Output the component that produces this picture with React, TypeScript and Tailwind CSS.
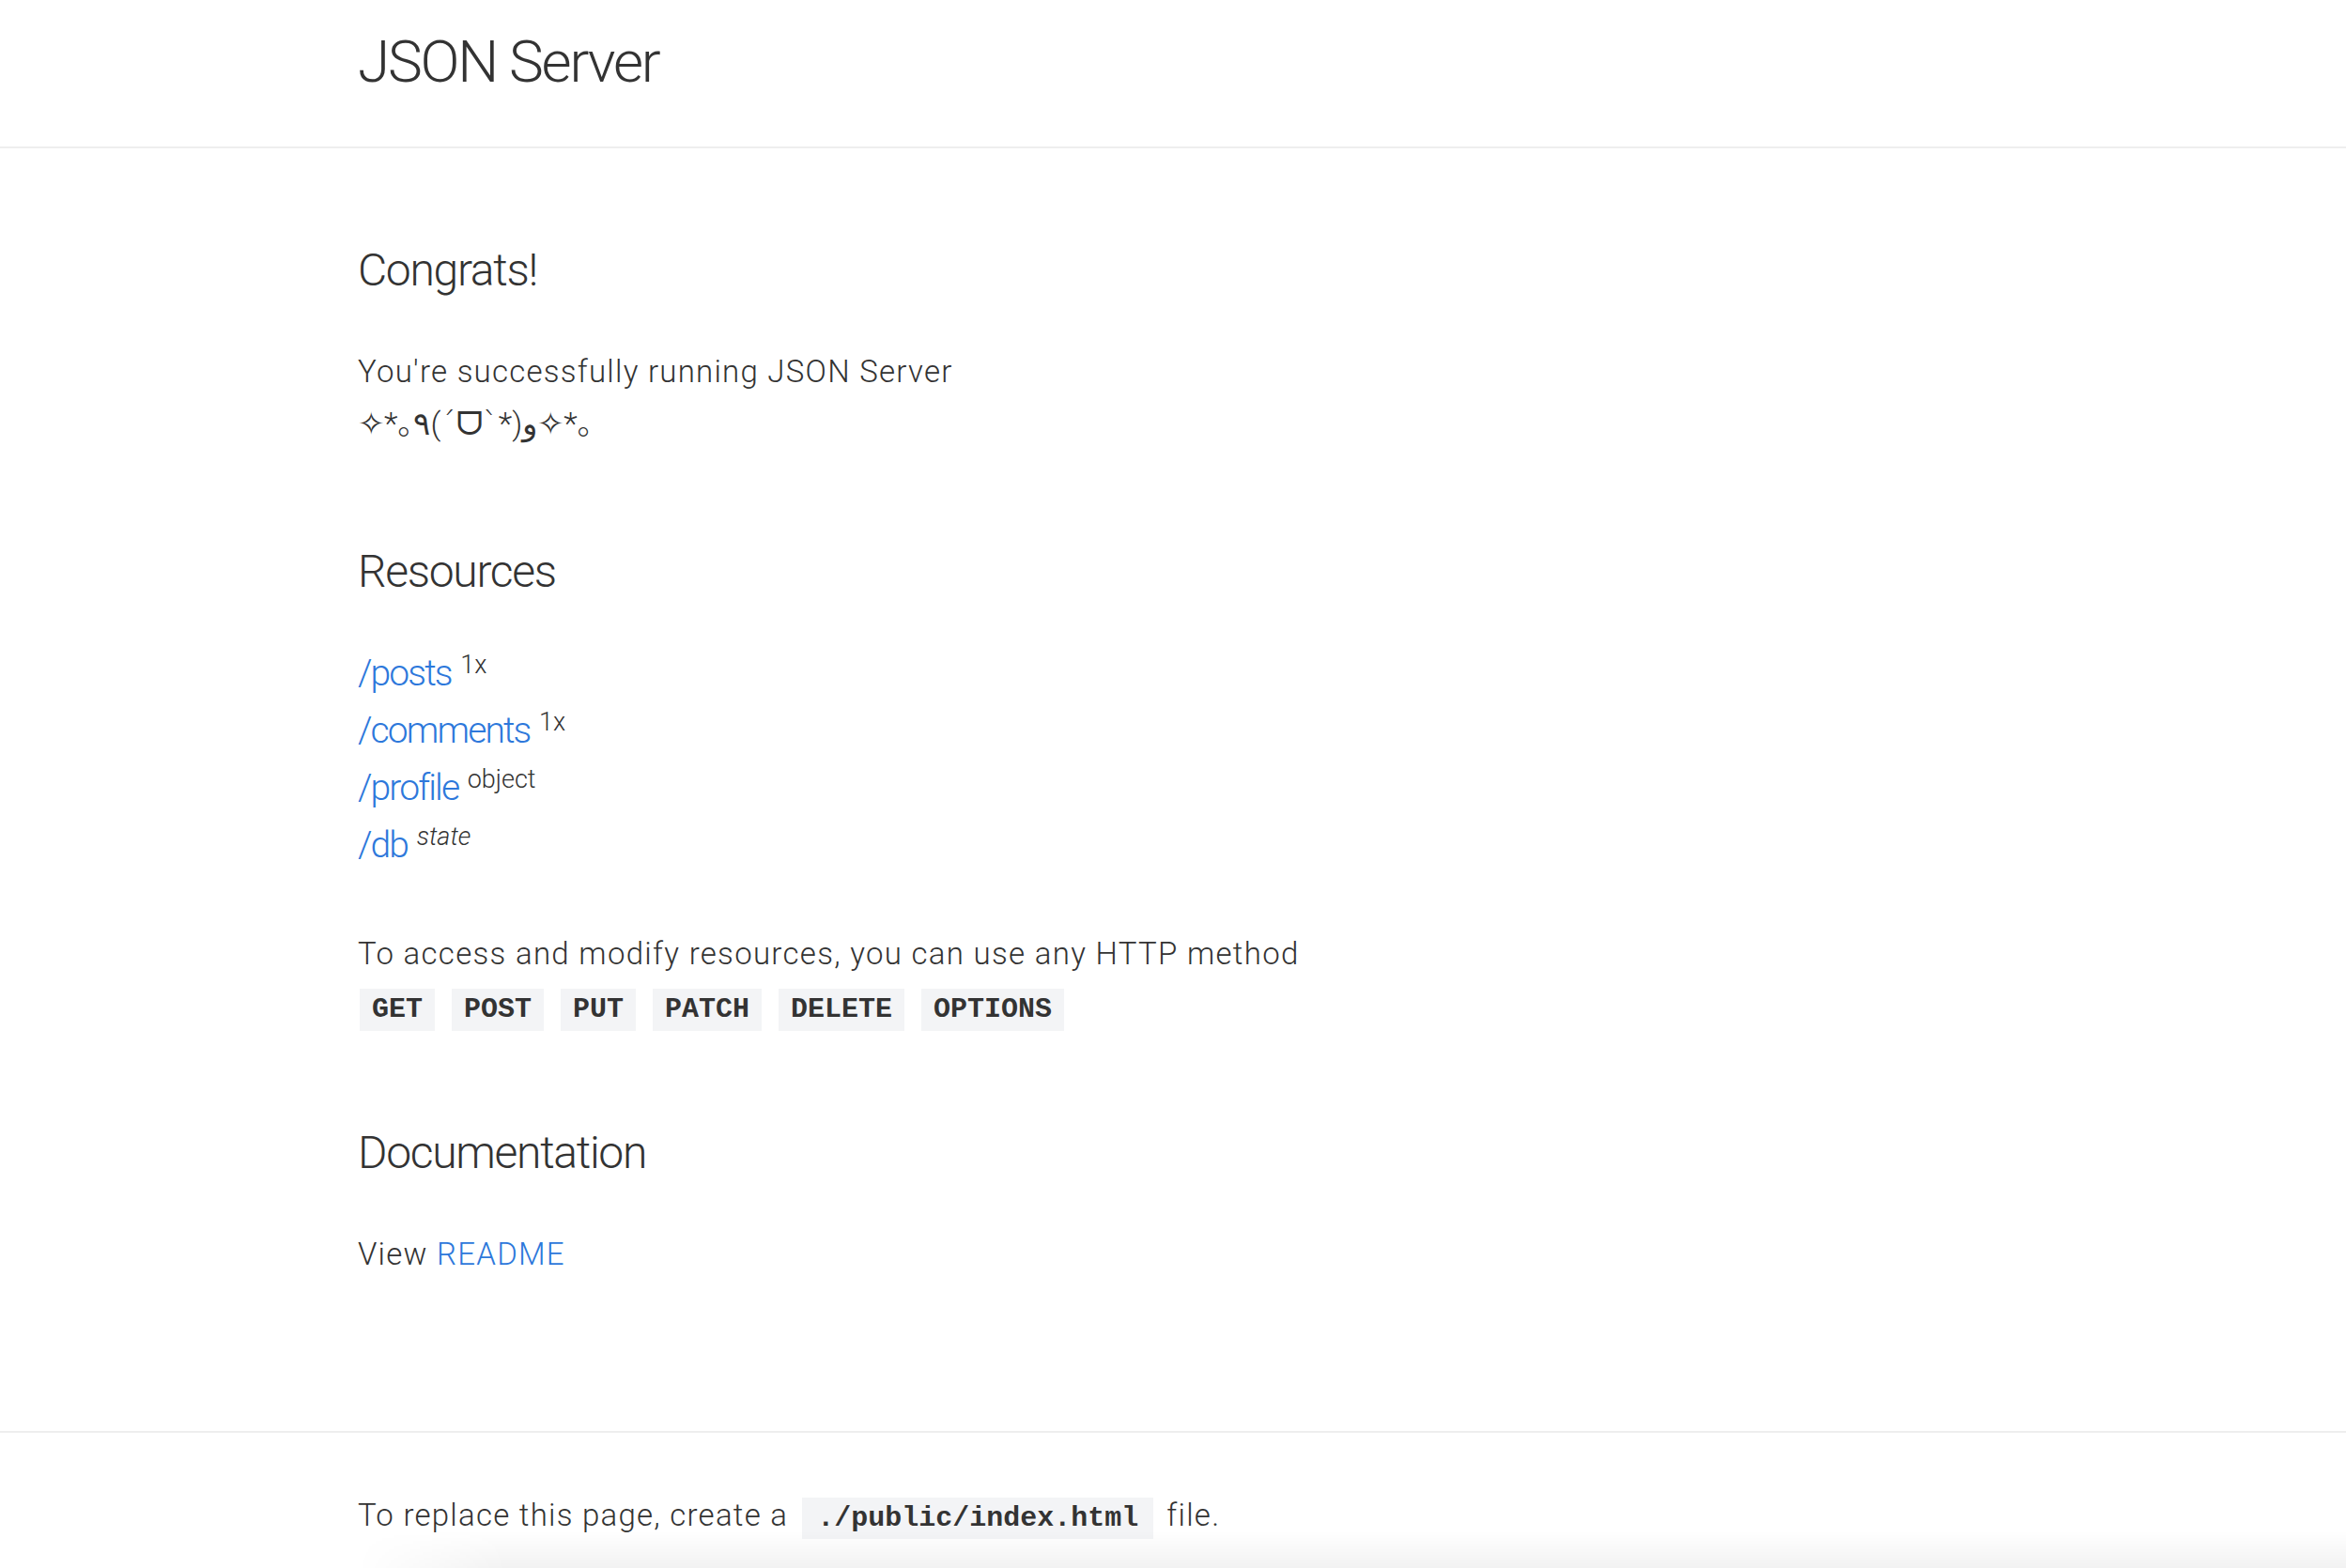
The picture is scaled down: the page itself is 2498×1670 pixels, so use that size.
import React from "react";

const methods = ["GET", "POST", "PUT", "PATCH", "DELETE", "OPTIONS"];

const resources: { path: string; note: string; italic?: boolean }[] = [
  { path: "/posts", note: "1x" },
  { path: "/comments", note: "1x" },
  { path: "/profile", note: "object" },
  { path: "/db", note: "state", italic: true },
];

export default function App() {
  return (
    <div className="min-h-screen bg-white text-[#333333] font-['Roboto','DejaVu_Sans','Noto_Sans_CJK_JP',sans-serif] font-light">
      <header className="border-b-2 border-[#eeeeee]">
        <div className="mx-auto w-[1736px] pt-[34px] pb-[58px]">
          <h1 className="text-[62px] leading-[64px] tracking-[-2.2px] font-light">JSON Server</h1>
        </div>
      </header>

      <main className="mx-auto w-[1736px] pt-[106px] pb-[160px]">
        <section>
          <h2 className="text-[48px] leading-[48px] tracking-[-1.3px] font-light">Congrats!</h2>
          <p className="mt-[56px] text-[33px] leading-[56px] tracking-[1.25px]">
            You're successfully running JSON Server
            <br />
            <span className="text-[34px] leading-none tracking-normal">✧*｡٩(ˊᗜˋ*)و✧*｡</span>
          </p>
        </section>

        <section className="mt-[105px]">
          <h2 className="text-[48px] leading-[48px] tracking-[-1.3px] font-light">Resources</h2>
          <ul className="mt-[54px]">
            {resources.map((r) => (
              <li key={r.path} className="text-[39px] leading-[61px]">
                <a href="#" className="tracking-[-1.9px] text-[#2d78db]">
                  {r.path}
                </a>{" "}
                <sup className="text-[27px] text-[#333333]">
                  {r.italic ? <em>{r.note}</em> : r.note}
                </sup>
              </li>
            ))}
          </ul>
          <div className="mt-[57px] text-[33px] leading-[56px] tracking-[1.3px]">
            <p>To access and modify resources, you can use any HTTP method</p>
            <div className="ml-[2px] mt-[3px] flex h-[56px] items-center gap-[18px] tracking-normal">
              {methods.map((m) => (
                <code
                  key={m}
                  className="h-[45px] bg-[#f3f4f6] px-[13px] font-['Liberation_Mono','Courier_New',monospace] text-[30px] leading-[45px] font-bold text-[#333333]"
                >
                  {m}
                </code>
              ))}
            </div>
          </div>
        </section>

        <section className="mt-[101px]">
          <h2 className="text-[48px] leading-[48px] tracking-[-1.3px] font-light">Documentation</h2>
          <p className="mt-[56px] text-[33px] leading-[56px] tracking-[1.25px]">
            View{" "}
            <a href="#" className="text-[#2d78db]">
              README
            </a>
          </p>
        </section>
      </main>

      <footer className="relative h-[146px] border-t-2 border-[#eeeeee] overflow-hidden">
        <div className="mx-auto w-[1736px] pt-[60px]">
          <p className="text-[33px] leading-[56px] tracking-[1.25px]">
            To replace this page, create a
            <code className="ml-[15px] mr-[14px] inline-block h-[44px] bg-[#f3f4f6] px-[16px] align-baseline font-['Liberation_Mono','Courier_New',monospace] text-[30px] leading-[44px] tracking-normal font-bold text-[#333333]">
              ./public/index.html
            </code>
            file.
          </p>
        </div>
        <div className="pointer-events-none absolute bottom-0 left-[380px] right-0 h-[40px] bg-[linear-gradient(to_bottom,rgba(0,0,0,0),rgba(0,0,0,0.05))] [mask-image:linear-gradient(to_right,transparent,black_160px)]" />
      </footer>
    </div>
  );
}
